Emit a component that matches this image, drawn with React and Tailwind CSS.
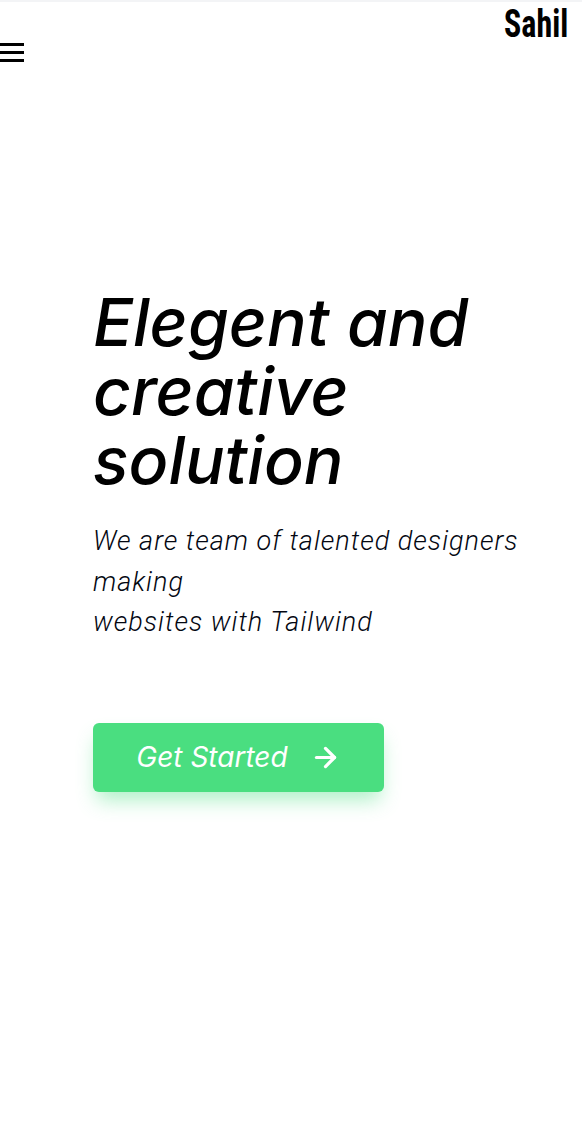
import { ArrowRight } from 'lucide-react';

export default function App() {
  return (
    <div className="min-h-[1126px] bg-white border-t-2 border-gray-100 font-['Inter',sans-serif] text-black">
      <header className="flex items-start justify-between">
        <button className="mt-[38px] text-black">
          <svg width="26" height="24" viewBox="0 0 26 24" fill="none" stroke="currentColor" strokeWidth="2.8">
            <path d="M0 4.5h24M0 12.5h24M0 20.5h24" />
          </svg>
        </button>
        <h1 className="mr-[14px] mt-0 text-[39px] leading-[44px] font-bold font-['Roboto_Condensed',sans-serif] [transform:scaleX(0.82)] origin-right">
          Sahil
        </h1>
      </header>

      <main className="pl-[93px] pt-[224px]">
        <h2 className="italic text-[66px] leading-[69px] font-medium">
          Elegent and<br />creative<br />solution
        </h2>
        <p className="mt-[26px] w-[450px] italic font-light text-[27px] leading-[40.5px] tracking-[1px] text-gray-950 font-['Roboto',sans-serif]">
          We are team of talented designers making<br />websites with Tailwind
        </p>
        <button className="mt-[80px] flex items-center justify-center gap-[22px] w-[291px] h-[69px] rounded-md bg-[#4ade80] text-white italic text-[28px] shadow-[0_12px_20px_-4px_rgba(74,222,128,0.45)]">
          Get Started
          <ArrowRight size={31} strokeWidth={2.5} />
        </button>
      </main>
    </div>
  );
}
